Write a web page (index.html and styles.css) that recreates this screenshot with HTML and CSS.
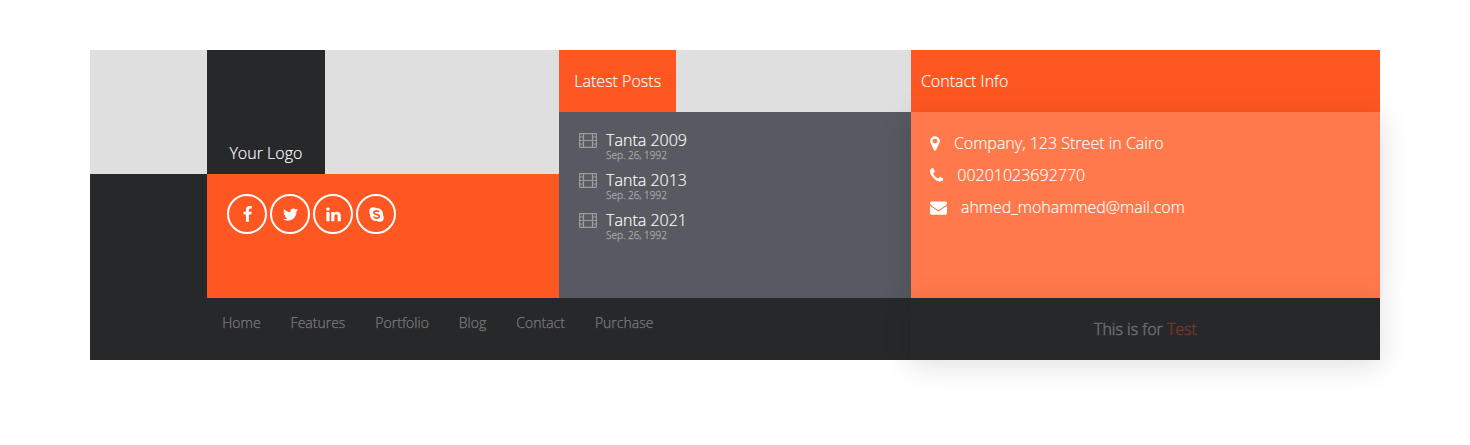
FILE: index.html
```
<!DOCTYPE html>
<html lang="en">
<head>
<meta charset="utf-8">
<title>Footer</title>
<link rel="stylesheet" href="styles.css">
</head>
<body>
<svg width="0" height="0" class="sprite">
  <symbol id="film" viewBox="0 0 18 15">
    <path fill="none" stroke="currentColor" stroke-width="1.200" d="M1 .6h16q.4 0 .4.5v12.800q0 .5-.4.5H1q-.4 0-.4-.5V1.100Q.6.6 1 .6zM4.500 .5v14M13.500 .5v14M4.500 7.500h9M.5 4h4M.5 7.500h4M.5 11h4M13.500 4h4M13.500 7.500h4M13.500 11h4"/>
  </symbol>
</svg>
<footer class="footer">
  <div class="logo">Your Logo</div>
  <div class="side"></div>
  <div class="social">
    <a class="circle"><svg viewBox="0 0 1792 1792"><path d="M1343 12v264h-157q-86 0-116 36t-30 108v189h293l-39 296h-254v759h-306v-759h-255v-296h255v-218q0-186 104-288.500t277-102.500q147 0 228 12z"/></svg></a>
    <a class="circle"><svg viewBox="0 0 1792 1792"><path d="M1684 408q-67 98-162 167 1 14 1 42 0 130-38 259.500t-115.500 248.500-184.500 210.500-258 146-323 54.500q-271 0-496-145 35 4 78 4 225 0 401-138-105-2-188-64.500t-114-159.500q33 5 61 5 43 0 85-11-112-23-185.500-111.500t-73.500-205.500v-4q68 38 146 41-66-44-105-115t-39-154q0-88 44-163 121 149 294.500 238.500t371.500 99.500q-8-38-8-74 0-134 94.500-228.500t228.500-94.500q140 0 236 102 109-21 205-78-37 115-142 178 93-10 186-50z"/></svg></a>
    <a class="circle"><svg viewBox="0 0 1792 1792"><path d="M477 625v991h-330v-991h330zm21-306q1 73-50.500 122t-135.500 49h-2q-82 0-132-49t-50-122q0-74 51.500-122.500t134.500-48.500 133 48.500 51 122.500zm1166 729v568h-329v-530q0-105-40.500-164.500t-126.500-59.500q-63 0-105.500 34.500t-63.500 85.500q-11 30-11 81v553h-329q2-399 2-647t-1-296l-1-48h329v144h-2q20-32 41-56t56.500-52 87-43.500 114.500-15.500q171 0 275 113.500t104 332.500z"/></svg></a>
    <a class="circle"><svg viewBox="0 0 16 16"><circle cx="5" cy="5" r="3.800"/><circle cx="11" cy="11" r="3.800"/><circle cx="8" cy="8" r="6.200"/><path class="skype-s" d="M10.600 5.900Q10 4.600 8 4.600 5.500 4.700 5.500 6.200 5.500 7.400 8 7.900 10.700 8.400 10.700 9.700 10.600 11.400 8 11.400 5.800 11.400 5.300 9.900"/></svg></a>
  </div>
  <h2 class="posts-title">Latest Posts</h2>
  <ul class="posts">
    <li class="post"><svg class="film"><use href="#film"/></svg><div><h3 class="post-name">Tanta 2009</h3><p class="date">Sep. 26, 1992</p></div></li>
    <li class="post"><svg class="film"><use href="#film"/></svg><div><h3 class="post-name">Tanta 2013</h3><p class="date">Sep. 26, 1992</p></div></li>
    <li class="post"><svg class="film"><use href="#film"/></svg><div><h3 class="post-name">Tanta 2021</h3><p class="date">Sep. 26, 1992</p></div></li>
  </ul>
  <h2 class="contact-title">Contact Info</h2>
  <ul class="contact">
    <li class="line"><svg class="pin" viewBox="384 0 1024 1792"><path d="M1152 640q0-106-75-181t-181-75-181 75-75 181 75 181 181 75 181-75 75-181zm256 0q0 109-33 179l-364 774q-16 33-47.500 52t-67.500 19-67.500-19-46.500-52l-365-774q-33-70-33-179 0-212 150-362t362-150 362 150 150 362z"/></svg>Company, 123 Street in Cairo</li>
    <li class="line"><svg class="phone" viewBox="192 0 1408 1792"><path d="M1600 1240q0 27-10 70.500t-21 68.500q-21 50-122 106-94 51-186 51-27 0-52.500-3.500t-57.500-12.500-47.500-14.500-55.500-20.500-49-18q-98-35-175-83-128-79-264.500-215.500t-215.500-264.500q-48-77-83-175-3-9-18-49t-20.500-55.500-14.500-47.500-12.500-57.500-3.500-52.500q0-92 51-186 56-101 106-122 25-11 68.500-21t70.500-10q14 0 21 3 18 6 53 76 11 19 30 54t35 63.500 31 53.500q3 4 17.500 25t21.500 35.500 7 28.500q0 20-28.500 50t-62 55-62 53-28.500 46q0 9 5 22.500t8.500 20.500 14 24 11.500 19q76 137 174 235t235 174q2 1 19 11.500t24 14 20.500 8.500 22.500 5q18 0 46-28.500t53-62 55-62 50-28.500q14 0 28.500 7t35.500 21.500 25 17.500q25 15 53.500 31t63.500 35 54 30q70 35 76 53 3 7 3 21z"/></svg>00201023692770</li>
    <li class="line"><svg class="mail" viewBox="0 0 1792 1792"><path d="M1792 710v794q0 66-47 113t-113 47h-1472q-66 0-113-47t-47-113v-794q44 49 101 87 362 246 497 345 57 42 92.500 65.500t94.500 48 110 24.500h2q51 0 110-24.500t94.500-48 92.500-65.500q170-123 498-345 57-39 100-87zm0-294q0 79-49 151t-122 123q-376 261-468 325-10 7-42.500 31t-54 38.500-52 32.500-57.500 27-50 9h-2q-23 0-50-9t-57.500-27-52-32.500-54-38.500-42.500-31q-91-64-262-182.500t-205-142.500q-62-42-117-115.500t-55-136.500q0-78 41.500-130t118.500-52h1472q65 0 112.500 47t47.500 113z"/></svg>ahmed_mohammed@mail.com</li>
  </ul>
  <nav class="nav"><a>Home</a><a>Features</a><a>Portfolio</a><a>Blog</a><a>Contact</a><a>Purchase</a></nav>
  <div class="credit"><span>This is for <span class="accent">Test</span></span></div>
</footer>
</body>
</html>
```
FILE: styles.css
```
* { box-sizing: border-box; margin: 0; padding: 0; }
body {
  padding: 50px 90px;
  background: #fff;
  font: 300 16px/24px "Open Sans", sans-serif;
  color: #fff;
  -webkit-text-stroke: .15px;
}
.sprite { display: none; }
ul { list-style: none; }
h2, h3 { font-size: 16px; font-weight: 300; }
svg { fill: currentColor; }
.footer {
  display: grid;
  grid-template-columns: repeat(11, 1fr);
  grid-template-rows: repeat(5, 62px);
  background: #dfdfdf;
}
.logo {
  grid-area: 1 / 2 / 3 / 3;
  display: flex;
  align-items: flex-end;
  justify-content: center;
  padding-bottom: 9px;
  background: #27282a;
}
.side { grid-area: 3 / 1 / 6 / 2; background: #27282a; }
.social {
  grid-area: 3 / 2 / 5 / 5;
  display: flex;
  align-items: flex-start;
  gap: 3px;
  padding: 20px;
  background: #ff5722;
}
.circle {
  width: 40px;
  height: 40px;
  display: flex;
  align-items: center;
  justify-content: center;
  border: 2px solid #fff;
  border-radius: 50%;
}
.circle svg { width: 17px; height: 17px; }
.skype-s { fill: none; stroke: #ff5722; stroke-width: 1.500; }
.posts-title {
  grid-area: 1 / 5 / 2 / 6;
  line-height: 62px;
  text-align: center;
  background: #ff5722;
}
.posts {
  grid-area: 2 / 5 / 5 / 8;
  padding: 18px 20px;
  background: #575a61;
}
.post { display: flex; gap: 9px; height: 40px; }
.film { width: 18px; height: 15px; margin-top: 3px; color: #999ca0; }
.post-name { line-height: 20px; }
.date { font-size: 10px; line-height: 10px; color: #a2a3a5; -webkit-text-stroke: .3px; }
.contact-title {
  grid-area: 1 / 8 / 2 / 12;
  padding-left: 10px;
  line-height: 62px;
  background: #ff5722;
}
.contact, .credit { box-shadow: 0 5px 30px rgba(0, 0, 0, .13); }
.contact {
  grid-area: 2 / 8 / 5 / 12;
  padding: 15px 19px;
  background: #ff794d;
}
.line { display: flex; align-items: center; height: 32px; }
.line svg { height: 17px; margin-right: 14px; }
.pin { width: 10px; }
.phone { width: 13.400px; }
.mail { width: 17px; }
.nav {
  grid-area: 5 / 2 / 6 / 8;
  display: flex;
  gap: 30px;
  padding: 13px 15px;
  background: #27282a;
  font-size: 14px;
  color: #7a7b7d;
  -webkit-text-stroke: .25px;
}
.credit {
  grid-area: 5 / 8 / 6 / 12;
  display: flex;
  align-items: center;
  justify-content: center;
  background: #27282a;
  color: #66696d;
  -webkit-text-stroke: .6px;
}
.accent { color: #73342a; }
```
